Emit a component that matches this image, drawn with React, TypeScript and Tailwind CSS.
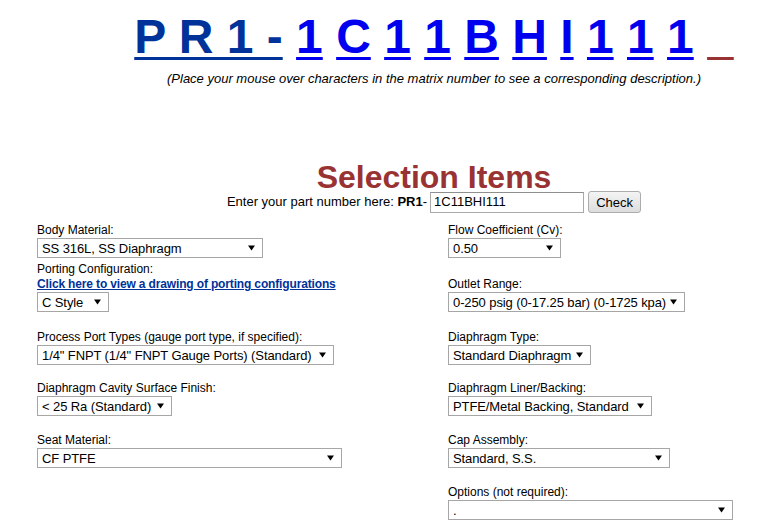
const matrix = ['1', 'C', '1', '1', 'B', 'H', 'I', '1', '1', '1'];

function Arrow() {
  return (
    <svg width="7" height="6" viewBox="0 0 7 6" className="shrink-0">
      <path d="M0 0.5h7L3.5 5.5z" fill="#000" />
    </svg>
  );
}

function Select({ value, className }: { value: string; className: string }) {
  return (
    <div
      className={`flex items-center justify-between gap-[3px] h-[20px] border border-[#a6a6a6] bg-white pl-[4px] pr-[7px] text-[13px] leading-none text-black whitespace-nowrap ${className}`}
    >
      <span className="tracking-[-0.1px]">{value}</span>
      <Arrow />
    </div>
  );
}

function Label({ children, className = '' }: { children: React.ReactNode; className?: string }) {
  return <div className={`text-[12px] leading-[15px] text-black ${className}`}>{children}</div>;
}

export default function App() {
  return (
    <div className="w-[762px] h-[527px] bg-white overflow-hidden font-['Liberation_Sans',Arial,sans-serif] text-black">
      {/* Matrix header */}
      <div className="pl-[106px] flex flex-col items-center">
        <div className="pt-[13px] text-[48px] font-bold leading-[48px] whitespace-pre">
          <span className="text-[#003399] underline decoration-[3px] underline-offset-[4px]">P R 1 -</span>{' '}
          {matrix.map((c, i) => (
            <span key={i}>
              <span className="text-[#0000ee] underline decoration-[3px] underline-offset-[4px]">{c}</span>{' '}
            </span>
          ))}
          <span className="text-[#993333] underline decoration-[3px] underline-offset-[4px]">{'\u00a0\u00a0'}</span>
        </div>
        <div className="mt-[10px] text-[13px] leading-[15px] italic">
          (Place your mouse over characters in the matrix number to see a corresponding description.)
        </div>

        <h1 className="mt-[76px] text-[32px] font-bold leading-[30px] text-[#993333]">Selection Items</h1>
        <div className="-mt-px flex items-center text-[13px]">
          <span>
            Enter your part number here: <b>PR1</b>-
          </span>
          <div className="ml-[3px] w-[154px] h-[21px] border border-[#a9a9a9] border-t-[#8f8f8f] flex items-center pl-[3px]">
            1C11BHI111
          </div>
          <button className="ml-[4px] w-[53px] h-[22px] rounded-[3px] border border-[#acacac] bg-gradient-to-b from-[#f4f4f4] to-[#dddddd] text-[13px] leading-none">
            Check
          </button>
        </div>
      </div>

      {/* Selection fields */}
      <div className="mt-[10px] flex">
        <div className="w-[448px] pl-[37px] flex flex-col">
          <Label>Body Material:</Label>
          <Select value="SS 316L, SS Diaphragm" className="w-[226px]" />
          <Label className="mt-[4px]">Porting Configuration:</Label>
          <a href="#" className="self-start text-[12px] leading-[15px] font-bold text-[#003399] underline tracking-[-0.15px]">
            Click here to view a drawing of porting configurations
          </a>
          <Select value="C Style" className="w-[72px]" />
          <Label className="mt-[18px]">Process Port Types (gauge port type, if specified):</Label>
          <Select value={'1/4" FNPT (1/4" FNPT Gauge Ports) (Standard)'} className="w-[297px]" />
          <Label className="mt-[16px]">Diaphragm Cavity Surface Finish:</Label>
          <Select value="< 25 Ra (Standard)" className="w-[135px]" />
          <Label className="mt-[17px]">Seat Material:</Label>
          <Select value="CF PTFE" className="w-[305px]" />
        </div>
        <div className="flex flex-col">
          <Label>Flow Coefficient (Cv):</Label>
          <Select value="0.50" className="w-[113px]" />
          <Label className="mt-[19px]">Outlet Range:</Label>
          <Select value="0-250 psig (0-17.25 bar) (0-1725 kpa)" className="w-[237px]" />
          <Label className="mt-[18px]">Diaphragm Type:</Label>
          <Select value="Standard Diaphragm" className="w-[143px]" />
          <Label className="mt-[16px]">Diaphragm Liner/Backing:</Label>
          <Select value="PTFE/Metal Backing, Standard" className="w-[204px]" />
          <Label className="mt-[17px]">Cap Assembly:</Label>
          <Select value="Standard, S.S." className="w-[222px]" />
          <Label className="mt-[17px]">Options (not required):</Label>
          <Select value="." className="w-[285px]" />
        </div>
      </div>
    </div>
  );
}
